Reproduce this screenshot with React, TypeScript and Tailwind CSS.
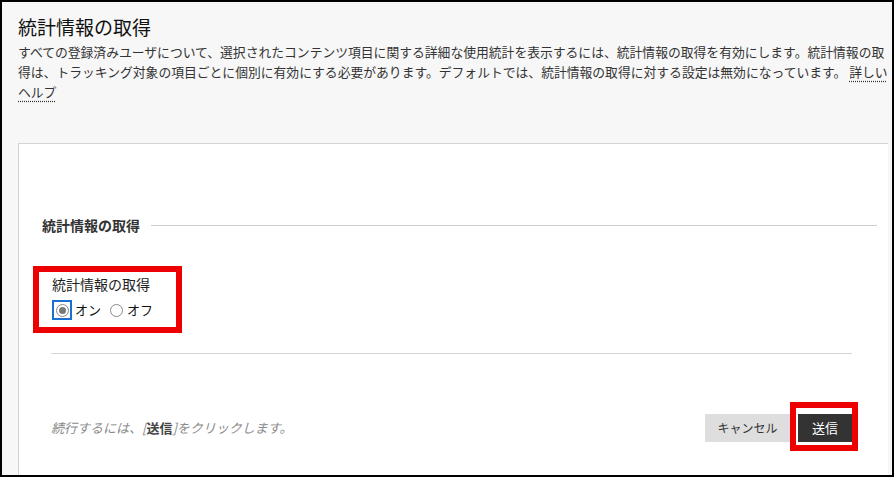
import React from 'react';

function Radio({ checked, focused, label }: { checked?: boolean; focused?: boolean; label: string }) {
  return (
    <label className="flex items-center">
      <span
        className={
          focused
            ? 'flex h-[20px] w-[20px] items-center justify-center border-2 border-[#1a6fd0]'
            : 'flex h-[20px] w-[16px] items-center justify-center'
        }
      >
        <span className="flex h-[13px] w-[13px] items-center justify-center rounded-full border border-[#8a8a8a] bg-white">
          {checked && <span className="h-[7px] w-[7px] rounded-full bg-[#7a7a7a]" />}
        </span>
      </span>
      <span className="ml-[3px] text-[13px] leading-[20px] text-[#111]">{label}</span>
    </label>
  );
}

export default function App() {
  return (
    <div className="h-[477px] w-[894px] overflow-hidden border-2 border-black bg-[#f7f7f7] font-['Noto_Sans_CJK_JP',sans-serif] text-[#333]">
      {/* Header */}
      <div className="pl-[16px] pt-[12px]">
        <h1 className="text-[19px] font-normal leading-[26px] text-[#111]">統計情報の取得</h1>
        <p className="mt-[2px] whitespace-nowrap text-[12.8px] leading-[20px] text-[#333]">
          すべての登録済みユーザについて、選択されたコンテンツ項目に関する詳細な使用統計を表示するには、統計情報の取得を有効にします。統計情報の取
          <br />
          得は、トラッキング対象の項目ごとに個別に有効にする必要があります。デフォルトでは、統計情報の取得に対する設定は無効になっています。{' '}
          <span className="underline decoration-dotted decoration-[#333] underline-offset-[4px]">
            詳しい
            <br />
            ヘルプ
          </span>
        </p>
      </div>

      {/* Panel */}
      <div className="ml-[16px] mr-[4px] mt-[41px] h-[400px] border-l border-t border-[#d4d4d4] bg-white">
        <div className="flex items-center pl-[23px] pr-[11px] pt-[71px]">
          <h2 className="text-[14px] font-bold leading-[20px] text-[#333]">統計情報の取得</h2>
          <div className="ml-[11px] h-px flex-1 bg-[#cfcfcf]" />
        </div>

        <div className="relative ml-[33px] mt-[39px] w-fit">
          <div className="text-[14px] leading-[20px] text-[#222]">統計情報の取得</div>
          <div className="mt-[6px] flex items-center gap-[7px]">
            <Radio checked focused label="オン" />
            <Radio label="オフ" />
          </div>
          <div className="pointer-events-none absolute left-[-19px] top-[-8px] h-[67px] w-[149px] border-[6px] border-[#ee0000]" />
        </div>

        <div className="ml-[32px] mr-[36px] mt-[33px] h-px bg-[#d4d4d4]" />

        <div className="ml-[32px] mr-[36px] mt-[60px] flex items-center justify-between">
          <p className="text-[13px] italic leading-[20px] text-[#8a8a8a]">
            続行するには、[<span className="font-bold not-italic text-[#444]">送信</span>]をクリックします。
          </p>
          <div className="flex items-center gap-[8px]">
            <button className="h-[28px] w-[85px] bg-[#dedede] text-[12px] text-[#333]">キャンセル</button>
            <div className="relative">
              <button className="h-[28px] w-[54px] bg-[#333333] text-[13px] text-white">送信</button>
              <div className="pointer-events-none absolute bottom-[-9px] left-[-8px] right-[-6px] top-[-12px] border-[6px] border-[#ee0000]" />
            </div>
          </div>
        </div>
      </div>
    </div>
  );
}
